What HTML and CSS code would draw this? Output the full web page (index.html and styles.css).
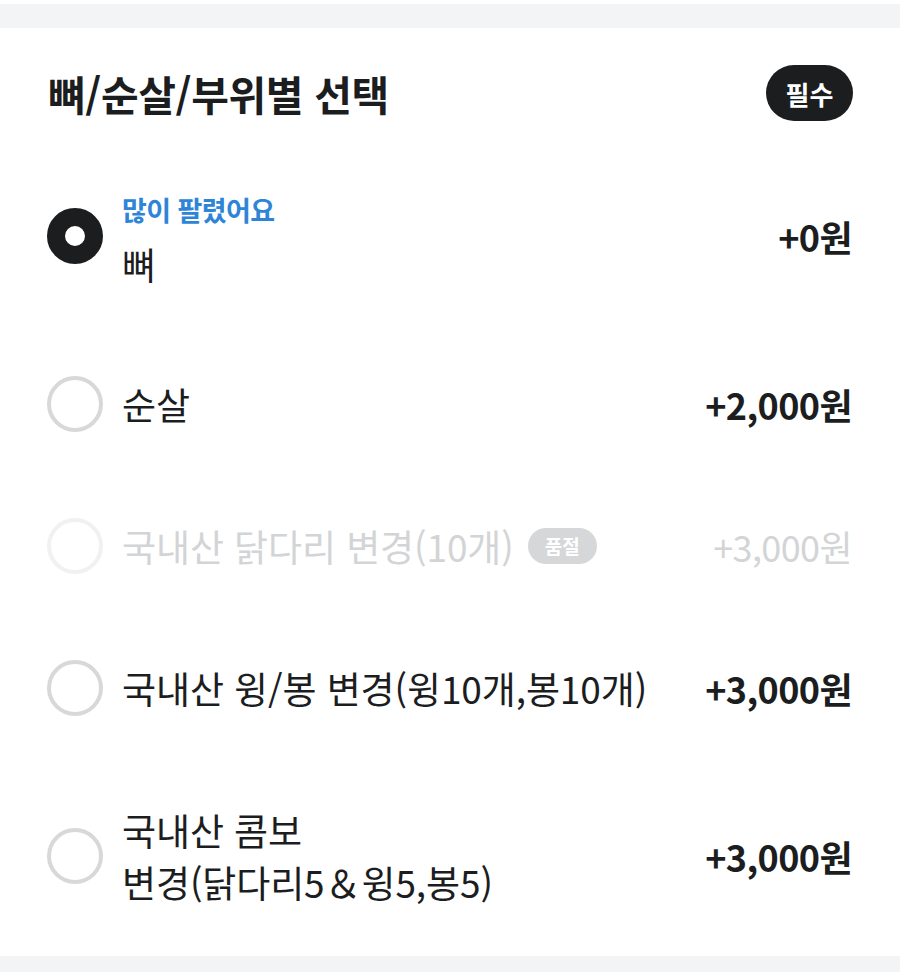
FILE: index.html
```html
<!DOCTYPE html>
<html lang="ko">
<head>
<meta charset="utf-8">
<link rel="stylesheet" href="styles.css">
</head>
<body>
<div class="top-white"></div>
<div class="divider"></div>
<section class="group">
  <header class="group-head">
    <h2 class="group-title">뼈/순살/부위별 선택</h2>
    <span class="badge-required">필수</span>
  </header>
  <ul class="options">
    <li class="option">
      <span class="radio radio-on"></span>
      <div class="option-body">
        <div class="option-tag">많이 팔렸어요</div>
        <div class="option-name">뼈</div>
      </div>
      <div class="option-price">+0원</div>
    </li>
    <li class="option">
      <span class="radio"></span>
      <div class="option-body">
        <div class="option-name">순살</div>
      </div>
      <div class="option-price">+2,000원</div>
    </li>
    <li class="option option-disabled">
      <span class="radio"></span>
      <div class="option-body">
        <div class="option-name">국내산 닭다리 변경(10개) <span class="badge-soldout">품절</span></div>
      </div>
      <div class="option-price">+3,000원</div>
    </li>
    <li class="option">
      <span class="radio"></span>
      <div class="option-body">
        <div class="option-name">국내산 윙/봉 변경(윙10개,봉10개)</div>
      </div>
      <div class="option-price">+3,000원</div>
    </li>
    <li class="option option-last">
      <span class="radio"></span>
      <div class="option-body">
        <div class="option-name">국내산 콤보<br>변경(닭다리5＆윙5,봉5)</div>
      </div>
      <div class="option-price">+3,000원</div>
    </li>
  </ul>
</section>
<div class="divider divider-bottom"></div>
</body>
</html>
```
FILE: styles.css
```css
* { box-sizing: border-box; }
html, body { margin: 0; padding: 0; background: #fff; }
body {
  font-family: "Noto Sans CJK KR", "Noto Sans", sans-serif;
  color: #1c1d1f;
  width: 900px;
  height: 972px;
  overflow: hidden;
}
.top-white { height: 4px; background: #fff; }
.divider { height: 24px; background: #f3f4f5; }
.divider-bottom { height: 30px; }

.group { background: #fff; }
.group-head {
  display: flex;
  align-items: center;
  justify-content: space-between;
  padding: 37px 47px 18px 48px;
}
.group-title {
  margin: 0;
  font-size: 41px;
  font-weight: 700;
  line-height: 56px;
  letter-spacing: -0.4px;
}
.badge-required {
  display: inline-flex;
  align-items: center;
  justify-content: center;
  width: 87px;
  height: 56px;
  border-radius: 28px;
  background: #1c1d1f;
  color: #fff;
  font-size: 26px;
  font-weight: 700;
}

.options { list-style: none; margin: 0; padding: 0 48px 0 47px; }
.option {
  display: flex;
  align-items: center;
  padding: 43px 0;
}
.option-last { padding: 45px 0 48px; }
.radio {
  flex: none;
  width: 56px;
  height: 56px;
  border-radius: 50%;
  border: 4px solid #d7d8da;
  margin-right: 19px;
}
.radio-on { border: 18px solid #1c1d1f; }
.option-body { flex: 1; }
.option-tag {
  color: #2e85d8;
  font-size: 27px;
  font-weight: 700;
  line-height: 56px;
  letter-spacing: -0.6px;
}
.option-name {
  font-size: 37px;
  line-height: 52px;
  letter-spacing: -0.1px;
  display: flex;
  align-items: center;
  flex-wrap: wrap;
}
.option-price {
  flex: none;
  font-size: 36px;
  font-weight: 700;
  letter-spacing: -0.6px;
  line-height: 52px;
}
.option-disabled .option-name,
.option-disabled .option-price { color: #d3d4d6; }
.option-disabled .option-price { font-weight: 400; }
.option-disabled .radio { border-color: #f0f1f2; }
.badge-soldout {
  display: inline-flex;
  align-items: center;
  justify-content: center;
  width: 69px;
  height: 36px;
  border-radius: 18px;
  background: #d6d7d9;
  color: #fff;
  font-size: 19px;
  font-weight: 700;
  letter-spacing: 0;
  margin-left: 14px;
}
```
